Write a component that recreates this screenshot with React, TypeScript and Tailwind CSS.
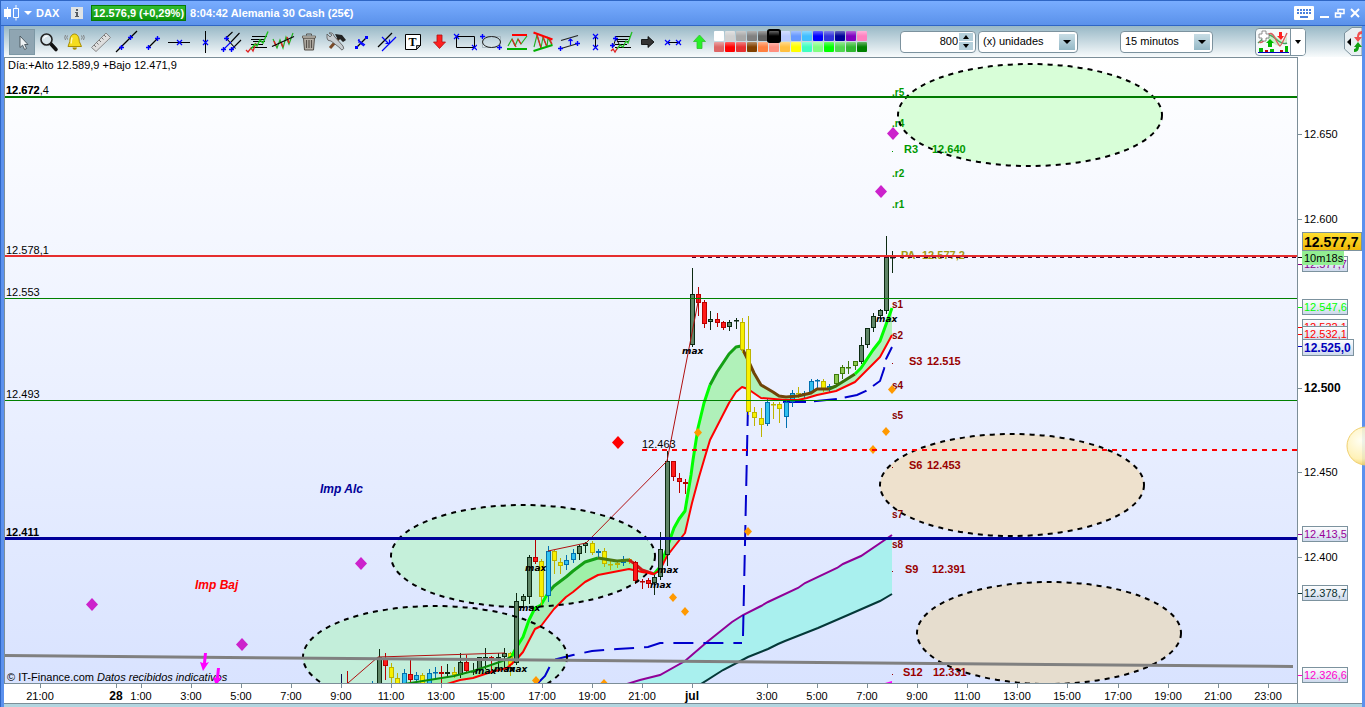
import React from 'react';

type Tone = 'dark' | 'red' | 'yellow' | 'blue' | 'lime';

// [x, high, bodyTop, bodyBottom, low, tone]
type Candle = [number, number, number, number, number, Tone];

const TONES: Record<Tone, { fill: string; stroke: string }> = {
  dark: { fill: '#5f8566', stroke: '#0c2a12' },
  red: { fill: '#ff1a1a', stroke: '#b80000' },
  yellow: { fill: '#f8f000', stroke: '#bdb400' },
  blue: { fill: '#30c0f0', stroke: '#0070b0' },
  lime: { fill: '#8cc850', stroke: '#3c7808' },
};

const CANDLES: Candle[] = [
  [379, 649, 657, 690, 690, 'dark'],
  [385, 653, 658, 666, 679, 'red'],
  [391, 663, 667, 678, 690, 'yellow'],
  [397, 673, 678, 690, 690, 'yellow'],
  [404, 669, 673, 690, 690, 'blue'],
  [410, 660, 674, 680, 690, 'red'],
  [416, 672, 675, 680, 690, 'blue'],
  [422, 673, 675, 690, 690, 'yellow'],
  [429, 669, 673, 690, 690, 'blue'],
  [435, 667, 672, 673, 678, 'blue'],
  [441, 666, 672, 674, 690, 'red'],
  [447, 664, 672, 674, 677, 'dark'],
  [454, 667, 672, 675, 677, 'yellow'],
  [460, 653, 662, 675, 677, 'dark'],
  [466, 655, 662, 671, 672, 'red'],
  [473, 663, 671, 672, 674, 'dark'],
  [479, 657, 657, 670, 671, 'dark'],
  [485, 648, 657, 658, 668, 'dark'],
  [491, 656, 657, 658, 673, 'red'],
  [498, 653, 657, 658, 668, 'dark'],
  [504, 648, 653, 657, 667, 'dark'],
  [510, 652, 653, 665, 675, 'yellow'],
  [516, 593, 601, 663, 664, 'dark'],
  [523, 594, 596, 601, 605, 'dark'],
  [529, 555, 557, 597, 603, 'dark'],
  [535, 540, 557, 562, 563, 'red'],
  [541, 559, 561, 597, 605, 'yellow'],
  [548, 546, 551, 596, 601, 'blue'],
  [554, 550, 551, 561, 573, 'yellow'],
  [560, 558, 562, 566, 573, 'yellow'],
  [566, 555, 560, 565, 569, 'blue'],
  [573, 549, 553, 560, 562, 'blue'],
  [579, 545, 546, 554, 559, 'dark'],
  [585, 542, 543, 546, 552, 'dark'],
  [592, 541, 543, 553, 554, 'yellow'],
  [598, 549, 551, 553, 557, 'blue'],
  [604, 548, 551, 564, 566, 'yellow'],
  [610, 559, 564, 565, 569, 'yellow'],
  [617, 561, 563, 565, 567, 'yellow'],
  [623, 556, 559, 563, 565, 'blue'],
  [629, 558, 559, 562, 563, 'yellow'],
  [635, 561, 562, 581, 583, 'red'],
  [642, 579, 581, 582, 588, 'red'],
  [648, 578, 580, 584, 587, 'red'],
  [654, 573, 577, 583, 594, 'dark'],
  [660, 532, 549, 577, 579, 'dark'],
  [667, 451, 461, 555, 565, 'dark'],
  [673, 461, 461, 477, 480, 'red'],
  [679, 473, 478, 482, 492, 'red'],
  [685, 479, 482, 484, 493, 'red'],
  [692, 268, 294, 345, 346, 'dark'],
  [698, 287, 294, 303, 315, 'red'],
  [704, 300, 302, 324, 327, 'red'],
  [710, 311, 319, 322, 329, 'dark'],
  [717, 313, 319, 323, 326, 'red'],
  [723, 321, 322, 328, 329, 'red'],
  [729, 320, 322, 327, 330, 'dark'],
  [736, 318, 320, 321, 328, 'dark'],
  [742, 318, 322, 350, 352, 'yellow'],
  [748, 316, 349, 412, 414, 'yellow'],
  [754, 407, 412, 418, 425, 'yellow'],
  [761, 408, 418, 425, 436, 'yellow'],
  [767, 398, 402, 424, 425, 'blue'],
  [773, 402, 404, 405, 418, 'yellow'],
  [779, 402, 404, 409, 422, 'yellow'],
  [786, 401, 402, 417, 427, 'blue'],
  [792, 390, 393, 402, 406, 'blue'],
  [798, 387, 393, 394, 397, 'yellow'],
  [804, 391, 393, 394, 397, 'blue'],
  [811, 379, 381, 392, 393, 'blue'],
  [817, 379, 380, 381, 387, 'blue'],
  [823, 379, 381, 389, 391, 'yellow'],
  [829, 384, 386, 389, 392, 'blue'],
  [836, 374, 374, 384, 386, 'lime'],
  [842, 365, 367, 374, 378, 'lime'],
  [848, 361, 367, 368, 373, 'lime'],
  [855, 361, 361, 366, 369, 'lime'],
  [861, 337, 345, 362, 363, 'dark'],
  [867, 328, 328, 345, 347, 'dark'],
  [873, 313, 316, 328, 331, 'dark'],
  [880, 309, 310, 316, 318, 'dark'],
  [886, 236, 257, 311, 313, 'dark'],
  [892, 251, 257, 258, 272, 'dark'],
];

// these bodies are painted over the averages
const FRONT_CANDLES = CANDLES.filter(([x]) => [516, 541, 548, 635, 660, 667, 742, 748].includes(x));

// moving average, split where its colour changes
const FAST_SEGMENTS = [
  { color: '#0a8a0a', width: 2, points: '404,684 454,676 473,671 491,665 505,660 512,656' },
  { color: '#00ff00', width: 3, points: '512,656 516,648 523,637 529,620 535,608 541,605 548,593' },
  { color: '#14a014', width: 3, points: '548,593 554,586 566,577 573,571 585,562 598,558' },
  { color: '#4c7a10', width: 3, points: '598,558 617,561 629,560' },
  { color: '#d01818', width: 3, points: '629,560 635,564 642,570 654,574' },
  { color: '#00ff00', width: 3, points: '654,574 660,567 667,548 674,528 679,519 685,511 691,475 693,460 698,428 704,403 710,385' },
  { color: '#14a014', width: 3, points: '710,385 717,372 729,354 736,347 741,346' },
  { color: '#704408', width: 3, points: '741,346 748,360 754,373 761,385 773,392 779,396 786,397 798,396 811,393 817,389 829,389' },
  { color: '#387008', width: 3, points: '829,389 836,386 855,374' },
  { color: '#00ff00', width: 3, points: '855,374 861,368 873,350 880,341 892,308' },
];

const SLOW_POINTS =
  '447,684 460,680 473,678 491,672 507,668 516,660 523,652 535,629 541,626 554,609 566,597 573,592 585,582 598,575 629,569 642,572 654,574 660,570 667,556 674,547 685,533 692,503 699,477 704,460 710,440 729,403 736,392 742,387 748,389 761,398 786,400 798,400 807,398 817,395 836,391 855,382 873,364 880,357 892,335';

const UPPER_BAND = '627,684 640,680 660,675 685,661 707,642 732,622 743,615 761,606 768,602 798,588 805,583 837,568 843,564 861,556 892,535';
const LOWER_BAND = '701,684 723,670 748,657 768,649 778,644 785,641 818,628 848,615 880,601 892,594';

const reversePoints = (points: string) => points.split(' ').reverse().join(' ');

const ZONES = [
  { cx: 1030, cy: 115, fill: '#d8fed8' },
  { cx: 1012, cy: 485, fill: '#eee1cd' },
  { cx: 1049, cy: 633, fill: '#e6ddce' },
  { cx: 435, cy: 657, fill: '#c3eeda' },
  { cx: 523, cy: 556, fill: '#c5f0da' },
];

const DIAMONDS = [
  { x: 893, y: 133, size: 6, fill: '#cc22cc' },
  { x: 881, y: 191, size: 6, fill: '#cc22cc' },
  { x: 361, y: 563, size: 6, fill: '#cc22cc' },
  { x: 92, y: 604, size: 6, fill: '#cc22cc' },
  { x: 242, y: 644, size: 6, fill: '#cc22cc' },
  { x: 618, y: 442, size: 6, fill: '#ff0000' },
  { x: 698, y: 432, size: 4, fill: '#ff9900' },
  { x: 748, y: 531, size: 4, fill: '#ff9900' },
  { x: 673, y: 597, size: 4, fill: '#ff9900' },
  { x: 685, y: 611, size: 4, fill: '#ff9900' },
  { x: 886, y: 431, size: 4, fill: '#ff9900' },
  { x: 892, y: 389, size: 4, fill: '#ff9900' },
  { x: 873, y: 449, size: 4, fill: '#ff9900' },
  { x: 536, y: 680, size: 4, fill: '#ff9900' },
  { x: 604, y: 683, size: 4, fill: '#ff9900' },
];

const MAX_MARKS = [
  [682, 354],
  [876, 322],
  [525, 571],
  [519, 611],
  [650, 588],
  [657, 573],
  [475, 674],
  [494, 672],
  [506, 672],
];

const PIVOTS = [
  { x: 892, y: 96, text: '.r5', fill: '#009900' },
  { x: 892, y: 127, text: '.r4', fill: '#009900' },
  { x: 892, y: 177, text: '.r2', fill: '#009900' },
  { x: 892, y: 208, text: '.r1', fill: '#009900' },
  { x: 892, y: 308, text: 's1', fill: '#880000' },
  { x: 892, y: 339, text: 's2', fill: '#880000' },
  { x: 892, y: 389, text: 's4', fill: '#880000' },
  { x: 892, y: 419, text: 's5', fill: '#880000' },
  { x: 892, y: 518, text: 's7', fill: '#880000' },
  { x: 892, y: 548, text: 's8', fill: '#880000' },
];

const PIVOT_LEVELS = [
  { x: 904, priceX: 932, y: 153, name: 'R3', price: '12.640', fill: '#009900' },
  { x: 901, priceX: 922, y: 259, name: 'PA', price: '12.577,2', fill: '#a09a10' },
  { x: 909, priceX: 927, y: 365, name: 'S3', price: '12.515', fill: '#990000' },
  { x: 909, priceX: 927, y: 469, name: 'S6', price: '12.453', fill: '#990000' },
  { x: 905, priceX: 932, y: 573, name: 'S9', price: '12.391', fill: '#990000' },
  { x: 903, priceX: 933, y: 676, name: 'S12', price: '12.331', fill: '#990000' },
];

const PRICE_TICKS = [
  { y: 134, text: '12.650' },
  { y: 219, text: '12.600' },
  { y: 388, text: '12.500', bold: true },
  { y: 472, text: '12.450' },
  { y: 557, text: '12.400' },
];

const PRICE_TAGS = [
  { y: 256, text: '12.577,7', color: '#880088' },
  { y: 299, text: '12.547,6', color: '#00ff00' },
  { y: 319, text: '12.532,1', color: '#ff0000' },
  { y: 326, text: '12.532,1', color: '#ff0000' },
  { y: 526, text: '12.413,5', color: '#990099' },
  { y: 585, text: '12.378,7', color: '#0a3030' },
  { y: 667, text: '12.326,6', color: '#ff00cc' },
];

const TIME_TICKS = [
  { x: 40, text: '21:00' },
  { x: 116, text: '28', bold: true },
  { x: 141, text: '1:00' },
  { x: 191, text: '3:00' },
  { x: 241, text: '5:00' },
  { x: 291, text: '7:00' },
  { x: 341, text: '9:00' },
  { x: 391, text: '11:00' },
  { x: 441, text: '13:00' },
  { x: 491, text: '15:00' },
  { x: 542, text: '17:00' },
  { x: 592, text: '19:00' },
  { x: 642, text: '21:00' },
  { x: 692, text: 'jul', bold: true },
  { x: 767, text: '3:00' },
  { x: 817, text: '5:00' },
  { x: 867, text: '7:00' },
  { x: 917, text: '9:00' },
  { x: 967, text: '11:00' },
  { x: 1017, text: '13:00' },
  { x: 1067, text: '15:00' },
  { x: 1118, text: '17:00' },
  { x: 1168, text: '19:00' },
  { x: 1218, text: '21:00' },
  { x: 1268, text: '23:00' },
];

const PALETTE = [
  '#ffffff', '#d0d0d0', '#a8a8a8', '#808080', '#606060', '#000000', '#b8c8ff',
  '#6699ff', '#40bfff', '#0000ff', '#3333dd', '#000099', '#8000c0', '#ff80c0',
  '#dd6666', '#ff0000', '#e63030', '#804000', '#ff8040', '#ff9080', '#ffc040',
  '#ffff00', '#40ffc0', '#80ff80', '#00ff00', '#50d850', '#30b830', '#008000',
];

function Cross({ x, y }: { x: number; y: number }) {
  return <path d={`M${x - 2} ${y - 2}l5 5m0 -5l-5 5`} stroke="#0000ff" strokeWidth="1.2" fill="none" />;
}

function Plus({ x, y }: { x: number; y: number }) {
  return <path d={`M${x - 2} ${y + 0.5}h5m-2.5 -2.5v5`} stroke="#0000ff" strokeWidth="1.4" fill="none" />;
}

const TEXT_LINES = 'M9 7.5h15M8 10.5h13M10 12.5h12M8 15.5h12M8 18.5h16';

const TOOLS: { label: string; icon: React.ReactNode }[] = [
  {
    label: 'Puntero',
    icon: <path d="M11 7v11.500l2.600-2.300 2 4.300 2-1-2-4h3.400z" fill="#eef2f4" stroke="#45525a" strokeWidth="0.9" />,
  },
  {
    label: 'Zoom',
    icon: (
      <>
        <path d="M15.500 14.500l5.500 6" stroke="#111" strokeWidth="3.600" strokeLinecap="round" />
        <circle cx="11.500" cy="10.500" r="5.500" fill="#d7e4ea" stroke="#222" strokeWidth="1.600" />
        <path d="M8.500 9.500q1.500-2.500 4-2.300" stroke="#fff" strokeWidth="1.300" fill="none" />
      </>
    ),
  },
  {
    label: 'Alerta',
    icon: (
      <>
        <path d="M13.500 5c-4 .5-4.500 4-4.700 7.500L7 17.500h13.500L18.300 12.500C18 9 17.500 5.500 13.500 5z" fill="#f4dc20" stroke="#a88c00" />
        <path d="M11 8.500q-.8 3-.8 6" stroke="#fff8b0" strokeWidth="1.500" fill="none" />
        <path d="M11.500 18.500a2.200 2.200 0 0 0 4.400 0z" fill="#a88c00" />
        <path d="M6.500 6.500q-1.500 2 0 4M4.500 6q-1.500 2.500 0 5M20.500 6.500q1.500 2 0 4M22.500 6q1.500 2.500 0 5" stroke="#777" strokeWidth="0.9" fill="none" />
      </>
    ),
  },
  {
    label: 'Regla',
    icon: (
      <>
        <path d="M4.500 18.500L19 4l4.500 4.500L9 22.500z" fill="#dedede" stroke="#888" />
        <path d="M7 16l2 2M9.500 13.500l2 2M12 11l2 2M14.500 8.500l2 2M17 6l2 2" stroke="#666" strokeWidth="0.9" />
      </>
    ),
  },
  {
    label: 'Recta',
    icon: (
      <>
        <path d="M3 23L24 2" stroke="#000" strokeWidth="1.200" />
        <Plus x={8} y={18} />
        <Plus x={17} y={8} />
      </>
    ),
  },
  {
    label: 'Segmento',
    icon: (
      <>
        <path d="M10 18l9-9" stroke="#000" strokeWidth="1.200" />
        <Plus x={9} y={18} />
        <Plus x={18} y={9} />
      </>
    ),
  },
  {
    label: 'Horizontal',
    icon: (
      <>
        <path d="M3 13.500h22" stroke="#000" />
        <Cross x={14} y={13} />
      </>
    ),
  },
  {
    label: 'Vertical',
    icon: (
      <>
        <path d="M14.500 2v22" stroke="#000" />
        <Cross x={14} y={13} />
      </>
    ),
  },
  {
    label: 'Pitchfork',
    icon: (
      <>
        <path d="M9 9L15.500 3M9.500 9.500l9 10M14 13L22.500 4M15 20l9-9" stroke="#000" strokeWidth="1.100" />
        <path d="M6.500 20.500l7.500-7.500M14.500 20.500l3-3" stroke="#0000ff" strokeWidth="1.100" />
        <Plus x={9} y={9} />
        <Plus x={6} y={20} />
        <Plus x={14} y={20} />
      </>
    ),
  },
  {
    label: 'Fibonacci',
    icon: (
      <>
        <path d={TEXT_LINES} stroke="#000" />
        <path d="M3 21l2 2 3-4 2 3 3-8" stroke="#e02020" strokeWidth="1.300" fill="none" />
        <path d="M8 20l4-5 2 2 3-6 3 3L25 2.500" stroke="#20c020" strokeWidth="1.400" fill="none" />
      </>
    ),
  },
  {
    label: 'Regresión',
    icon: (
      <>
        <path d="M4 10l4 9 3-8 3 8 3-11 3 7 4-11" stroke="#20b020" strokeWidth="1.200" fill="none" />
        <path d="M5 12l2 5M12 13l2 5M18 8l2 6" stroke="#e02020" strokeWidth="1.500" />
        <path d="M3 17.500L25 7.500" stroke="#000" strokeWidth="1.100" />
      </>
    ),
  },
  {
    label: 'Borrar',
    icon: (
      <>
        <path d="M8.500 9l1 12h9l1-12z" fill="#b5b0a8" stroke="#55504a" />
        <path d="M11.500 11v8M14 11v8M16.500 11v8" stroke="#55504a" strokeWidth="1.200" />
        <path d="M7.500 7h13v2h-13z" fill="#d8d4cc" stroke="#55504a" strokeWidth="0.800" />
        <path d="M11.500 6.500v-1.500h5v1.500" stroke="#55504a" fill="none" />
      </>
    ),
  },
  {
    label: 'Configurar',
    icon: (
      <>
        <path d="M9 19L18 9" stroke="#7a4a28" strokeWidth="3" />
        <path d="M14 5l7 1 4 5-3 2-3-3-2 1z" fill="#222" />
        <path d="M6 5l3 3 2-2-3-2q4-1 5 3l9 10q2 3-1 4-1 0-2-2L10 12q-4 0-4-3z" fill="#c6ccd0" stroke="#555" strokeWidth="0.800" />
      </>
    ),
  },
  {
    label: 'Extremos',
    icon: (
      <>
        <path d="M10 18l10-10" stroke="#000" strokeWidth="1.300" />
        <path d="M8 17h3v3h-3zM18 7h3v3h-3z" fill="#0000ff" />
        <path d="M11 11l7 5M12 10v4M17 17l-4-3" stroke="#0000ff" strokeWidth="1.200" />
      </>
    ),
  },
  {
    label: 'Paralela',
    icon: (
      <>
        <path d="M5 18L19 4" stroke="#000" strokeWidth="1.200" />
        <path d="M9 22L23 8M9 8l7 7M12.500 14.500h4v-4" stroke="#0000ff" strokeWidth="1.200" fill="none" />
      </>
    ),
  },
  {
    label: 'Texto',
    icon: (
      <>
        <path d="M6.500 5.500h15v11l-4 4h-11z" fill="#fff" stroke="#000" />
        <path d="M21.500 16.500h-4v4z" fill="#999" stroke="#000" strokeWidth="0.800" />
        <text x="13.500" y="17" textAnchor="middle" fontSize="12" fontWeight="700" fill="#000" fontFamily="Liberation Serif, serif">T</text>
      </>
    ),
  },
  {
    label: 'Flecha abajo',
    icon: <path d="M12 6h5v7h3.500L14.500 19.500 8.500 13H12z" fill="#ff2020" stroke="#b01010" strokeWidth="0.800" />,
  },
  {
    label: 'Rectángulo',
    icon: (
      <>
        <path d="M5.500 7.500h18v11h-18z" fill="none" stroke="#000" />
        <Cross x={5} y={7} />
        <Cross x={23} y={18} />
      </>
    ),
  },
  {
    label: 'Elipse',
    icon: (
      <>
        <path d="M5.500 7.500h18v11h-18z" fill="none" stroke="#9aa8b0" strokeWidth="0.700" />
        <ellipse cx="14.500" cy="13" rx="9" ry="5.500" fill="none" stroke="#222" />
        <Plus x={5} y={7} />
        <Plus x={22} y={18} />
      </>
    ),
  },
  {
    label: 'Soporte',
    icon: (
      <>
        <path d="M5 17l4-7 3 7M12 17l3-7 3 5 6-8" stroke="#20b020" strokeWidth="1.200" fill="none" />
        <path d="M9 10l4 8M15 10l3 5" stroke="#e02020" strokeWidth="1.300" />
        <path d="M9 6h15" stroke="#ff0000" strokeWidth="2" />
        <path d="M4 20h20" stroke="#00b000" strokeWidth="2" />
      </>
    ),
  },
  {
    label: 'Triángulo',
    icon: (
      <>
        <path d="M5 18l3-12 4 13 2-11 4 10 1-9 4 7" stroke="#20b020" strokeWidth="1.100" fill="none" />
        <path d="M8 6l4 13M14 8l4 10M20 9l3 6" stroke="#e02020" strokeWidth="1.300" />
        <path d="M4.500 3.500l19 7" stroke="#ff0000" strokeWidth="2" />
        <path d="M4.500 22l19-6" stroke="#00b000" strokeWidth="2" />
      </>
    ),
  },
  {
    label: 'Canal',
    icon: (
      <>
        <path d="M6 11.500l17-5M6 19.500l17-5" stroke="#222" strokeWidth="1.200" />
        <path d="M15.500 10v6M13.500 12l2-2 2 2" stroke="#0000ff" fill="none" strokeWidth="1.200" />
        <Plus x={5} y={19} />
        <Plus x={22} y={14} />
      </>
    ),
  },
  {
    label: 'Distancia vertical',
    icon: (
      <>
        <path d="M14.500 8v11" stroke="#000" />
        <Cross x={14} y={7} />
        <Cross x={14} y={18} />
      </>
    ),
  },
  {
    label: 'Proyección',
    icon: (
      <>
        <path d={TEXT_LINES} stroke="#000" />
        <path d="M6 18l3-9 4 8" stroke="#111" fill="none" />
        <path d="M4 22l2-2 2 3 3-5" stroke="#e02020" strokeWidth="1.300" fill="none" />
        <path d="M10 20l3-4 3 2 3-6 2 2 4-11" stroke="#20c020" strokeWidth="1.300" fill="none" />
        <Plus x={8} y={9} />
        <Plus x={5} y={16} />
      </>
    ),
  },
  {
    label: 'Flecha derecha',
    icon: <path d="M8.500 10.500h6.500v-3l6 5.500-6 5.500v-3H8.500z" fill="#333" stroke="#000" strokeWidth="0.800" />,
  },
  {
    label: 'Distancia horizontal',
    icon: (
      <>
        <path d="M8 13.500h13" stroke="#000" />
        <Cross x={8} y={13} />
        <Cross x={19} y={13} />
      </>
    ),
  },
  {
    label: 'Flecha arriba',
    icon: <path d="M12 19.500h5v-7h3.500L14.500 6l-6 6.500H12z" fill="#28f028" stroke="#30c030" strokeWidth="0.800" />,
  },
];

function TitleBar() {
  return (
    <header className="flex h-[26px] shrink-0 items-center border-t border-b border-[#2f66c4] bg-linear-to-b from-[#79adff] to-[#5a91ea] pr-1 pl-[3px] text-[11px] font-bold text-white">
      <svg width="18" height="18" viewBox="0 0 18 18" aria-hidden="true">
        <path d="M0 5h7v8H0zM3 3h1v12H3z" fill="#fff" />
        <path d="M9.500 4.500h5v9h-5zM12 1v3.500M12 13.500v3" fill="none" stroke="#fff" />
      </svg>
      <svg className="ml-0.5" width="8" height="5" viewBox="0 0 8 5" aria-hidden="true">
        <path d="M0 0h8L4 4z" fill="#fff" />
      </svg>
      <h1 className="ml-1">DAX</h1>
      <button aria-label="Información" className="ml-3 flex size-3 items-center justify-center bg-[#dfe3e6]">
        <svg width="12" height="12" viewBox="0 0 12 12" aria-hidden="true">
          <path d="M5 2h2v2H5zM4 5h3v4h1v1H4V9h1V6H4z" fill="#555c62" />
        </svg>
      </button>
      <span className="ml-2 flex h-4 items-center border border-[#067a06] bg-linear-to-b from-[#30bc30] to-[#0a960a] px-px whitespace-nowrap">
        12.576,9 (+0,29%)
      </span>
      <span className="ml-1 whitespace-nowrap">8:04:42 Alemania 30 Cash (25€)</span>
      <div className="ml-auto flex items-center gap-1">
        <button aria-label="Teclado">
          <svg width="20" height="14" viewBox="0 0 20 14" aria-hidden="true">
            <rect width="20" height="14" rx="1" fill="#fff" />
            <path d="M3 4h14M3 7h14" stroke="#4a80dc" strokeWidth="2" strokeDasharray="2 1" />
            <path d="M6 11h8" stroke="#4a80dc" strokeWidth="2" />
          </svg>
        </button>
        <button aria-label="Minimizar">
          <svg width="12" height="12" viewBox="0 0 12 12" aria-hidden="true">
            <path d="M2 9h9v2H2z" fill="#fff" />
          </svg>
        </button>
        <button aria-label="Restaurar">
          <svg width="11" height="12" viewBox="0 0 11 12" aria-hidden="true">
            <path d="M4 5V2.500h6v4H7M1.500 6h5v4h-5zM1 6.500h6M4 2.500h6.500" fill="none" stroke="#fff" strokeWidth="1.500" />
          </svg>
        </button>
        <button aria-label="Cerrar">
          <svg width="12" height="12" viewBox="0 0 12 12" aria-hidden="true">
            <path d="M2 2l8 8M10 2l-8 8" stroke="#fff" strokeWidth="2" />
          </svg>
        </button>
      </div>
    </header>
  );
}

function DropDown({ label, value, className }: { label: string; value: string; className: string }) {
  return (
    <div className={`relative h-[22px] shrink-0 ${className}`}>
      <select
        aria-label={label}
        className="block h-full w-full appearance-none rounded-sm border border-[#7c929e] bg-white pl-1 text-[11px] text-black"
      >
        <option>{value}</option>
      </select>
      <span className="pointer-events-none absolute top-[3px] right-[3px] flex size-4 items-center justify-center bg-linear-to-b from-[#c8dde5] to-[#94b8c6]">
        <svg width="8" height="4" viewBox="0 0 8 4" aria-hidden="true">
          <path d="M0 0h8L4 4z" fill="#000" />
        </svg>
      </span>
    </div>
  );
}

function Toolbar() {
  return (
    <div role="toolbar" className="flex h-[31px] shrink-0 items-center bg-linear-to-b from-[#98b8c6] to-[#f8fbfc] pl-[5px]">
      {TOOLS.map((tool, i) => (
        <button
          key={tool.label}
          aria-label={tool.label}
          className={`size-[26px] shrink-0 ${i === 0 ? 'border border-[#7d98a5] bg-[#8fa5b2]' : ''}`}
        >
          <svg className={i === 0 ? '-m-px' : ''} width="26" height="26" viewBox="0 0 26 26" fill="none" aria-hidden="true">
            {tool.icon}
          </svg>
        </button>
      ))}
      <div className="ml-[3px] grid shrink-0 grid-cols-14 gap-px">
        {PALETTE.map((color) => (
          <button
            key={color}
            aria-label={color}
            style={{ backgroundColor: color }}
            className={`size-2.5 rounded-[1px] bg-linear-to-b from-white/40 via-transparent to-transparent ${
              color === '#000000' ? 'relative z-10 ring-2 ring-black' : ''
            }`}
          />
        ))}
      </div>
      <div className="ml-[33px] flex shrink-0 gap-0.5">
        <div className="flex h-[22px] w-[76px] items-center rounded-sm border border-[#7c929e] bg-white pr-0.5">
          <input
            aria-label="Número de unidades"
            defaultValue="800"
            className="w-0 min-w-0 flex-1 bg-transparent pr-px text-right text-[11px] text-black outline-none"
          />
          <div className="flex flex-col gap-px">
            {['M0 4L3 0l3 4z', 'M0 0h6L3 4z'].map((d, i) => (
              <button key={d} aria-label={i === 0 ? 'Más' : 'Menos'} className="flex h-2 w-3.5 items-center justify-center bg-[#b4cfda]">
                <svg width="6" height="4" viewBox="0 0 6 4" aria-hidden="true">
                  <path d={d} fill="#000" />
                </svg>
              </button>
            ))}
          </div>
        </div>
        <DropDown label="Tipo de unidades" value="(x) unidades" className="w-[100px]" />
      </div>
      <DropDown label="Intervalo" value="15 minutos" className="ml-[42px] w-[93px]" />
      <div className="ml-[42px] flex h-7 shrink-0 overflow-hidden rounded-sm border border-[#7c929e] bg-[#f6f9fa]">
        <button aria-label="Indicadores" className="border-r border-[#7c929e]">
          <svg width="34" height="26" viewBox="0 1 34 26" aria-hidden="true">
            <path d="M2 17q5-4 8-9t9 0 12 6V8q-5 12-11 9T11 10z" fill="#c8efc8" />
            <path d="M2 15q5-4 8-7t10 3 11 4" stroke="#40a860" strokeWidth="1.500" fill="none" />
            <path d="M3 14q4 2 8-6 4-6 8 2t5 8 7-13" stroke="#d86060" strokeWidth="1.500" fill="none" />
            <path d="M6 3h4v3h3v4h-3v3H6v-3H3V6h3z" fill="#fff" stroke="#777" strokeWidth="0.800" />
            <path d="M12 19v-4h-2l4-4 4 4h-2v4z" fill="#00b800" />
            <path d="M23 4v4h-2l4 4 3-4h-2V4z" fill="#ff2020" />
            <path d="M3 20h4v4H3zM14 21h4v3h-4zM29 18h3v6h-3z" fill="#00b800" />
            <path d="M9 22h3v2H9zM24 22h3v2h-3z" fill="#c00000" />
            <path d="M2 24.500h31" stroke="#0000c0" />
          </svg>
        </button>
        <button aria-label="Más indicadores" className="flex w-3.5 items-center justify-center bg-white">
          <svg width="6" height="4" viewBox="0 0 6 4" aria-hidden="true">
            <path d="M0 0h6L3 4z" fill="#000" />
          </svg>
        </button>
      </div>
      <button aria-label="Abrir órdenes" className="ml-auto shrink-0">
        <svg width="18" height="31" viewBox="0 0 18 31" aria-hidden="true">
          <path d="M18 1.500H8L.5 7v16l7 6.500H18z" fill="#e8eff2" stroke="#7c929e" />
          <path d="M7 12v8l-4-4z" fill="#000" />
          <path d="M18 5q-5 0-5 6h-3l4 5 4-5h-3q0-3 3-3z" fill="#f05050" />
          <path d="M10 26q5 0 5-5h3l-4-5-4 5h2q0 2-2 2z" fill="#10a010" />
        </svg>
      </button>
    </div>
  );
}

function CandleBar({ candle }: { candle: Candle }) {
  const [x, high, top, bottom, low, tone] = candle;
  const { fill, stroke } = TONES[tone];
  return (
    <g stroke={stroke} fill={fill}>
      <path d={`M${x + 0.5} ${high}V${low + 1}`} />
      <rect x={x - 1.5} y={top + 0.5} width="4" height={Math.max(bottom - top - 1, 0.5)} />
    </g>
  );
}

function PriceAxis() {
  return (
    <g fontSize="11">
      <path d="M1297.500 57V703" stroke="#7c8e98" />
      {PRICE_TICKS.map((tick) => (
        <g key={tick.text}>
          <path d={`M1298 ${tick.y + 0.5}h4`} stroke="#7c8e98" />
          <text x="1304" y={tick.y + 4} fontWeight={tick.bold ? 700 : 400} fontSize={tick.bold ? 12 : 11}>
            {tick.text}
          </text>
        </g>
      ))}
      <path d="M1298 257.500h4" stroke="#000" />
      {PRICE_TAGS.map((tag) => (
        <g key={tag.y}>
          <path d={`M1298 ${tag.y + 8.5}h4`} stroke={tag.color} />
          <rect x="1302.500" y={tag.y + 0.5} width="45" height="15" fill="url(#tag)" stroke="#7c929e" />
          <text x="1304" y={tag.y + 12} fill={tag.color}>
            {tag.text}
          </text>
        </g>
      ))}
      <path d="M1298 346.500h4" stroke="#0000cc" />
      <rect x="1302.500" y="339.500" width="51" height="16" fill="url(#tag)" stroke="#7c929e" />
      <text x="1304" y="352" fontSize="12" fontWeight="700" fill="#0000bb">12.525,0</text>
      <rect x="1302.500" y="232.500" width="59" height="18" fill="url(#gold)" stroke="#7c929e" />
      <text x="1304" y="247" fontSize="14" fontWeight="700">12.577,7</text>
      <rect x="1302" y="251" width="42" height="14" fill="#92ee92" />
      <text x="1304" y="262">10m18s</text>
    </g>
  );
}

function TimeAxis() {
  return (
    <g fontSize="11" textAnchor="middle">
      <path d="M4 683.500H1297" stroke="#7c8e98" />
      {TIME_TICKS.map((tick) => (
        <g key={tick.x}>
          <path d={`M${tick.x + 0.5} 684v4`} stroke="#7c8e98" />
          <text x={tick.x} y="700" fontWeight={tick.bold ? 700 : 400} fontSize={tick.bold ? 12 : 11}>
            {tick.text}
          </text>
        </g>
      ))}
    </g>
  );
}

function Chart() {
  return (
    <svg className="block w-full flex-1 overflow-visible bg-white" viewBox="4 57 1358 646" preserveAspectRatio="xMinYMin meet" role="img" aria-label="Gráfico DAX 15 minutos">
      <defs>
        <linearGradient id="sky" x1="0" y1="0" x2="0" y2="1">
          <stop offset="0" stopColor="#ffffff" />
          <stop offset="1" stopColor="#d9e3ff" />
        </linearGradient>
        <linearGradient id="tag" x1="0" y1="0" x2="0" y2="1">
          <stop offset="0" stopColor="#ffffff" />
          <stop offset="1" stopColor="#ccd8ec" />
        </linearGradient>
        <linearGradient id="gold" x1="0" y1="0" x2="0" y2="1">
          <stop offset="0" stopColor="#ffe030" />
          <stop offset="1" stopColor="#f0b808" />
        </linearGradient>
        <radialGradient id="bubble" cx="0.350" cy="0.350" r="0.700">
          <stop offset="0" stopColor="#fffef0" />
          <stop offset="0.700" stopColor="#fff0b0" />
          <stop offset="1" stopColor="#f0c850" />
        </radialGradient>
        <clipPath id="plot">
          <rect x="5" y="58" width="1292" height="625" />
        </clipPath>
      </defs>

      <rect x="4.500" y="57.500" width="1293" height="626" fill="url(#sky)" stroke="#7c8e98" />

      <g clipPath="url(#plot)">
        {ZONES.map((zone) => (
          <ellipse key={zone.cx} cx={zone.cx} cy={zone.cy} rx="132" ry="51" fill={zone.fill} />
        ))}

        {/* moving average channels */}
        <polygon points={`${UPPER_BAND} ${reversePoints(LOWER_BAND)}`} fill="#a9f0ee" />
        <polyline points={UPPER_BAND} fill="none" stroke="#900098" strokeWidth="2" />
        <polyline points={LOWER_BAND} fill="none" stroke="#043838" strokeWidth="2" />
        <polygon points={`${FAST_SEGMENTS.map((s) => s.points).join(' ')} ${reversePoints(SLOW_POINTS)}`} fill="#80f080" fillOpacity="0.550" />
        <path
          d="M538 683L545 676 553 660 573 655 592 651 617 649 648 647 660 643H742"
          fill="none"
          stroke="#0000cc"
          strokeWidth="2"
          strokeDasharray="20 10"
        />
        <path d="M743 636L748 404" fill="none" stroke="#0000cc" strokeWidth="2" strokeDasharray="21 9" />
        <path
          d="M783 402L807 402 837 399 857 395 866 391 880 381 884 369 886 359 892 347"
          fill="none"
          stroke="#0000cc"
          strokeWidth="2"
          strokeDasharray="23 8"
        />

        {CANDLES.map((candle) => (
          <CandleBar key={candle[0]} candle={candle} />
        ))}
        <path d="M341.500 674v10" stroke="#101050" />
        <path d="M347.500 671v13" stroke="#b80000" />
        <path d="M372.500 681v3" stroke="#0070b0" />

        {FAST_SEGMENTS.map((segment) => (
          <polyline key={segment.points} points={segment.points} fill="none" stroke={segment.color} strokeWidth={segment.width} strokeLinejoin="round" />
        ))}
        <polyline points={SLOW_POINTS} fill="none" stroke="#ff0000" strokeWidth="2" strokeLinejoin="round" />
        {FRONT_CANDLES.map((candle) => (
          <CandleBar key={candle[0]} candle={candle} />
        ))}
        <path d="M348 683L378 657 505 653M548 551L586 543 667 461 699 297" fill="none" stroke="#b01010" />

        {/* text annotations */}
        <g fontSize="10" fontWeight="700">
          {PIVOTS.map((pivot) => (
            <text key={pivot.text} x={pivot.x} y={pivot.y} fill={pivot.fill}>
              {pivot.text}
            </text>
          ))}
        </g>
        <g fontSize="11" fontWeight="700">
          {PIVOT_LEVELS.map((level) => (
            <g key={level.name} fill={level.fill}>
              {level.name !== 'PA' && <rect x="892" y={level.y - 2} width="1" height="1" />}
              <text x={level.x} y={level.y}>{level.name}</text>
              <text x={level.priceX} y={level.y}>{level.price}</text>
            </g>
          ))}
        </g>
        <g fontSize="9" fontWeight="700" fontStyle="italic" fontFamily="DejaVu Sans, sans-serif">
          {MAX_MARKS.map(([x, y]) => (
            <text key={`${x}-${y}`} x={x} y={y}>max</text>
          ))}
        </g>
        <text x="320" y="493" fontSize="12" fontWeight="700" fontStyle="italic" fill="#000099">Imp Alc</text>
        <text x="195" y="589" fontSize="12" fontWeight="700" fontStyle="italic" fill="#ff0000">Imp Baj</text>
        <text x="8" y="69" fontSize="11">Día:+Alto 12.589,9 +Bajo 12.471,9</text>
        <text x="7" y="681" fontSize="11">© IT-Finance.com</text>
        <text x="97" y="681" fontSize="11" fontStyle="italic">Datos recibidos indicativos</text>

        {ZONES.map((zone) => (
          <ellipse key={zone.cx} cx={zone.cx} cy={zone.cy} rx="132" ry="51" fill="none" stroke="#000" strokeWidth="2" strokeDasharray="5 5" />
        ))}

        {DIAMONDS.map(({ x, y, size, fill }) => (
          <path key={`${x}-${y}`} d={`M${x - size} ${y + 0.5}L${x} ${y - size}L${x + size} ${y + 0.5}L${x} ${y + size + 1}z`} fill={fill} />
        ))}

        {/* horizontal levels */}
        <path d="M5 97H1297" stroke="#007a00" strokeWidth="2" />
        <path d="M692 257.500H1297" stroke="#400030" strokeDasharray="4 4" />
        <path d="M5 256H1297" stroke="#e62e2e" strokeWidth="2" />
        <path d="M5 298.500H1297M5 400.500H1297" stroke="#008000" />
        <path d="M642 450H1297" stroke="#ff0000" strokeWidth="2" strokeDasharray="5 5" />
        <path d="M5 538.500H1297" stroke="#000099" strokeWidth="3" />
        <path d="M5 655.500L1293 666.500" stroke="#808080" strokeWidth="3" />

        <g fontSize="11">
          <text x="6" y="94" fontWeight="700">12.672</text>
          <text x="6" y="94">12.672,4</text>
          <text x="6" y="254">12.578,1</text>
          <text x="6" y="296">12.553</text>
          <text x="6" y="398">12.493</text>
          <text x="6" y="536" fontWeight="700">12.411</text>
          <text x="642" y="448">12.463</text>
        </g>

        <g fill="#ff00ff">
          <path d="M204 653h3l-1 10 3-1-6 9-3-9 3 1z" />
          <path d="M217 668h3l-1 10 3-1-6 9-3-9 3 1z" />
          <path d="M885 683l7-2v2z" />
        </g>
      </g>

      <PriceAxis />
      <TimeAxis />
      <circle cx="1366" cy="446" r="19" fill="url(#bubble)" fillOpacity="0.900" stroke="#f0d070" />
    </svg>
  );
}

export default function App() {
  return (
    <div className="flex h-screen flex-col overflow-hidden border-l border-[#2f66c4] bg-[#5b91ee] font-['Liberation_Sans',Arial,sans-serif]">
      <TitleBar />
      <main className="mr-[3px] flex min-h-0 flex-1 flex-col border-l-3 border-[#5b91ee]">
        <Toolbar />
        <Chart />
        <div className="h-1 shrink-0 border-t border-[#7c8e98] bg-[#b2d5df]" />
      </main>
    </div>
  );
}
